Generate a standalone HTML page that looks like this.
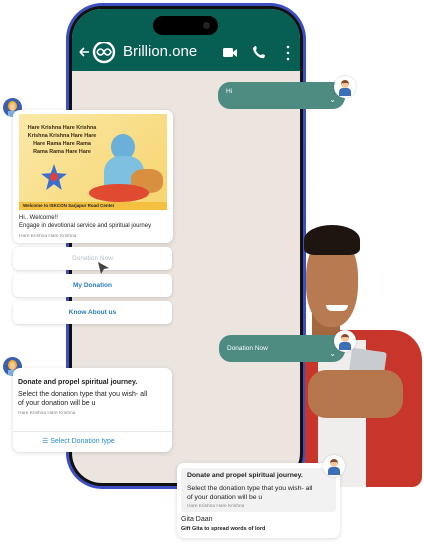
<!DOCTYPE html>
<html><head><meta charset="utf-8"><style>
*{margin:0;padding:0;box-sizing:border-box}
body{width:424px;height:550px;background:#fff;position:relative;overflow:hidden;font-family:"Liberation Sans",Arial,sans-serif}
.a{position:absolute}
.card{position:absolute;background:#fff;border-radius:7px;box-shadow:0 1px 4px rgba(0,0,0,.15)}
.btn{position:absolute;left:13px;width:159px;height:23px;background:#fff;border-radius:5px;box-shadow:0 1px 3px rgba(0,0,0,.15);font-size:6.5px;font-weight:bold;color:#2a7cc0;text-align:center;line-height:23px}
.av{position:absolute;width:22px;height:22px;border-radius:50%;background:#fff;box-shadow:0 0 2px rgba(0,0,0,.2);overflow:hidden}
.av i{position:absolute;left:7px;top:4px;width:8px;height:8px;border-radius:50%;background:#f4c9a0;border-top:3px solid #8a4a2a}
.av b{position:absolute;left:5px;top:12px;width:12px;height:8px;border-radius:4px 4px 0 0;background:#3b6fb8}
.avg{position:absolute;width:19px;height:19px;border-radius:50%;background:#3d5fb0;overflow:hidden}
.avg i{position:absolute;left:5px;top:3px;width:9px;height:10px;border-radius:50%;background:#f4c9a0;border:2px solid #f0b030;border-bottom:none}
.avg b{position:absolute;left:5px;top:13px;width:9px;height:6px;background:#7fb0e0}
.bub{position:absolute;background:#4e8b80;border-radius:12px;color:#fff;font-size:6.5px}
</style></head><body>
<div class="a" style="left:58px;top:0;width:270px;height:520px;background:radial-gradient(ellipse at 50% 50%,rgba(0,0,0,.06),rgba(0,0,0,0) 70%)"></div>
<div class="a" style="left:66px;top:3px;width:240px;height:486px;border-radius:36px;background:#3d4fc0"></div>
<div class="a" style="left:69px;top:6px;width:234px;height:480px;border-radius:33px;background:#111"></div>
<div class="a" style="left:72px;top:9px;width:228px;height:474px;border-radius:30px;background:#ebe4df;overflow:hidden">
  <div class="a" style="left:0;top:0;width:228px;height:62px;background:#065f52"></div>
</div>
<div class="a" style="left:153px;top:16px;width:65px;height:19px;border-radius:10px;background:#000"></div>
<div class="a" style="left:203px;top:22px;width:7px;height:7px;border-radius:50%;background:#222"></div>
<svg class="a" style="left:78px;top:42px" width="220" height="22" viewBox="0 0 220 22">
 <path d="M2 10h9M2 10l4-4M2 10l4 4" stroke="#fff" stroke-width="1.6" fill="none"/>
 <circle cx="26" cy="10" r="10" fill="none" stroke="#fff" stroke-width="2.4"/>
 <path d="M19 10c2-4 5-4 7 0s5 4 7 0c-2-4-5-4-7 0s-5 4-7 0" stroke="#fff" stroke-width="1.6" fill="none"/>
 <rect x="145" y="6" width="10" height="9" rx="1.5" fill="#fff"/><path d="M155 10l4-3v8l-4-3z" fill="#fff"/>
 <path d="M177 4c2 0 2 3 1 4 0 2 3 5 5 5 1-1 4-1 4 1l-1 2c-5 1-11-5-11-10z" fill="#fff"/>
 <circle cx="210" cy="5" r="1.3" fill="#fff"/><circle cx="210" cy="11" r="1.3" fill="#fff"/><circle cx="210" cy="17" r="1.3" fill="#fff"/>
</svg>
<div class="a" style="left:123px;top:43px;color:#fff;font-size:15px;line-height:18px">Brillion.one</div>
<div class="bub" style="left:218px;top:82px;width:127px;height:27px;padding:6px 8px">Hi<span class="a" style="right:9px;top:13px;font-size:8px">⌄</span></div>
<div class="av" style="left:334px;top:76px"><i></i><b></b></div>
<div class="avg" style="left:3px;top:98px"><i></i><b></b></div>
<div class="card" style="left:13px;top:110px;width:160px;height:133px"></div>
<div class="a" style="left:19px;top:114px;width:148px;height:96px;background:linear-gradient(135deg,#fbe9a8,#f7d46e);overflow:hidden">
 <div class="a" style="left:3px;top:10px;width:80px;font-size:5.4px;font-weight:bold;line-height:8px;color:#3a2a10;text-align:center;white-space:nowrap">Hare Krishna Hare Krishna<br>Krishna Krishna Hare Hare<br>Hare Rama Hare Rama<br>Rama Rama Hare Hare</div>
 <div class="a" style="left:22px;top:50px;width:26px;height:26px;background:#3a6ed0;clip-path:polygon(50% 0,62% 35%,100% 38%,70% 60%,80% 100%,50% 78%,20% 100%,30% 60%,0 38%,38% 35%)"></div>
 <div class="a" style="left:31px;top:59px;width:8px;height:8px;border-radius:50%;background:#e04040"></div>
 <div class="a" style="left:92px;top:20px;width:24px;height:26px;border-radius:50%;background:#6ab0d8"></div>
 <div class="a" style="left:85px;top:42px;width:40px;height:40px;border-radius:40% 40% 10% 10%;background:#7ec0e0"></div>
 <div class="a" style="left:112px;top:55px;width:32px;height:24px;border-radius:40%;background:#d89040"></div>
 <div class="a" style="left:70px;top:70px;width:60px;height:18px;border-radius:50%;background:#e04a30"></div>
 <div class="a" style="left:0;top:88px;width:148px;height:8px;background:#f5c040"></div>
 <div class="a" style="left:4px;top:89px;font-size:4.5px;font-weight:bold;color:#222">Welcome to ISKCON Sarjapur Road Center</div>
</div>
<div class="a" style="left:19px;top:215px;font-size:6px;line-height:7.5px;color:#222">Hi.. Welcome!!<br>Engage in devotional service and spiritual journey</div>
<div class="a" style="left:19px;top:234px;font-size:4.8px;color:#888">Hare Krishna Hare Krishna</div>
<div class="btn" style="top:247px;color:#b8c0c8;font-weight:normal">Donation Now</div>
<svg class="a" style="left:96px;top:261px" width="14" height="14"><path d="M2 1l11 6-5 1-3 5z" fill="#444"/></svg>
<div class="btn" style="top:274px">My Donation</div>
<div class="btn" style="top:301px">Know About us</div>
<div class="a" style="left:305px;top:330px;width:117px;height:157px;background:#c8352a;border-radius:20px 30px 10px 0"></div>
<div class="a" style="left:318px;top:340px;width:48px;height:147px;background:#f0eeec"></div>
<div class="a" style="left:312px;top:258px;width:28px;height:80px;background:#a5673f"></div>
<div class="a" style="left:306px;top:235px;width:52px;height:92px;border-radius:45%;background:#b87a50"></div>
<div class="a" style="left:304px;top:225px;width:56px;height:30px;border-radius:50% 50% 20% 20%;background:#1e1510"></div>
<div class="a" style="left:326px;top:305px;width:22px;height:6px;border-radius:0 0 8px 8px;background:#fff"></div>
<div class="a" style="left:350px;top:350px;width:35px;height:30px;border-radius:3px;background:#c8ccd0;transform:rotate(8deg)"></div>
<div class="a" style="left:308px;top:370px;width:95px;height:48px;border-radius:18px;background:#b5764c"></div>
<div class="bub" style="left:219px;top:335px;width:126px;height:27px;padding:10px 8px">Donation Now<span class="a" style="right:9px;top:14px;font-size:8px">⌄</span></div>
<div class="av" style="left:334px;top:330px"><i></i><b></b></div>
<div class="avg" style="left:3px;top:357px"><i></i><b></b></div>
<div class="card" style="left:13px;top:368px;width:159px;height:84px"></div>
<div class="a" style="left:18px;top:379px;font-size:7px;font-weight:bold;color:#222">Donate and propel spiritual journey.</div>
<div class="a" style="left:18px;top:390px;font-size:7px;line-height:9px;color:#222">Select the donation type that you wish- all<br>of your donation will be u</div>
<div class="a" style="left:18px;top:411px;font-size:4.8px;color:#888">Hare Krishna Hare Krishna</div>
<div class="a" style="left:13px;top:431px;width:159px;height:1px;background:#e8e8e8"></div>
<div class="a" style="left:42px;top:437px;font-size:7px;color:#2a8ad0">☰ Select Donation type</div>
<div class="card" style="left:177px;top:463px;width:163px;height:75px"></div>
<div class="a" style="left:181px;top:468px;width:155px;height:44px;background:#f2f2f2;border-radius:3px"></div>
<div class="a" style="left:187px;top:472px;font-size:6.8px;font-weight:bold;color:#222">Donate and propel spiritual journey.</div>
<div class="a" style="left:187px;top:484px;font-size:6.8px;line-height:9px;color:#222">Select the donation type that you wish- all<br>of your donation will be u</div>
<div class="a" style="left:187px;top:504px;font-size:4.8px;color:#888">Hare Krishna Hare Krishna</div>
<div class="a" style="left:181px;top:516px;font-size:7px;color:#222">Gita Daan</div>
<div class="a" style="left:181px;top:526px;font-size:5.5px;font-weight:bold;color:#222">Gift Gita to spread words of lord</div>
<div class="av" style="left:323px;top:455px"><i></i><b></b></div>
</body></html>
